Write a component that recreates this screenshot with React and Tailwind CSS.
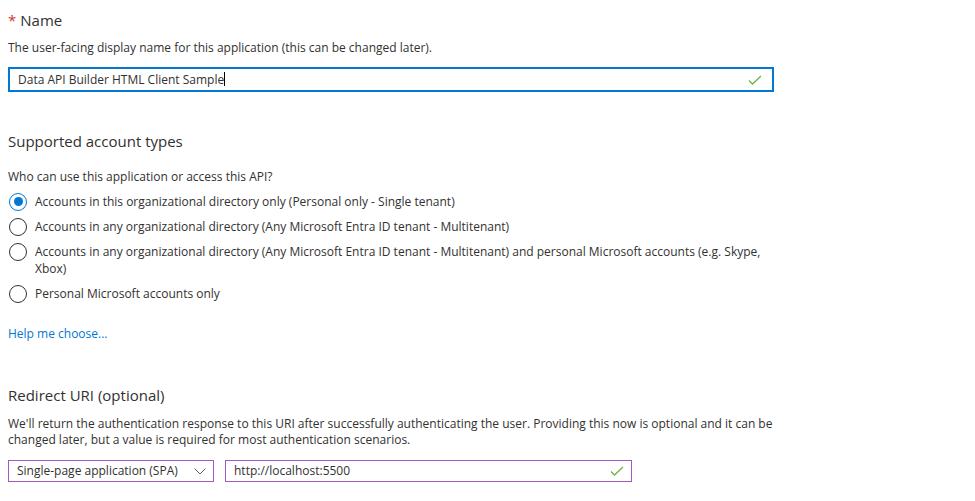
import React, { useState } from 'react';

function Check({ className }) {
  return (
    <svg width="14" height="10" viewBox="0 0 14 10" className={className}>
      <path d="M1 5.5 L4.5 9 L13 1" fill="none" stroke="#6bb34a" strokeWidth="1.3" />
    </svg>
  );
}

function Radio({ checked }) {
  return (
    <span className="flex h-[17px] shrink-0 items-center">
      <span className="flex h-[18px] w-[18px] items-center justify-center rounded-full border border-[#323130] bg-white data-[on=true]:border-[#0078d4]" data-on={checked}>
        {checked && <span className="h-[9px] w-[9px] rounded-full bg-[#0078d4]" />}
      </span>
    </span>
  );
}

const options = [
  'Accounts in this organizational directory only (Personal only - Single tenant)',
  'Accounts in any organizational directory (Any Microsoft Entra ID tenant - Multitenant)',
  'Accounts in any organizational directory (Any Microsoft Entra ID tenant - Multitenant) and personal Microsoft accounts (e.g. Skype, Xbox)',
  'Personal Microsoft accounts only',
];

export default function App() {
  const [picked, setPicked] = useState(0);

  return (
    <div className="min-h-screen bg-white pl-[8px] pt-[10px] text-[12px] text-[#323130]" style={{ fontFamily: '"Segoe UI", "Open Sans", sans-serif' }}>
      {/* Name */}
      <h2 className="text-[15px] leading-[20px]">
        <span className="mr-[4px] text-[#d13438]">*</span>Name
      </h2>
      <p className="mt-[10px] leading-[16px]">The user-facing display name for this application (this can be changed later).</p>
      <div className="mt-[11px] flex h-[25px] w-[766px] items-center border-2 border-[#0078d4] pl-[8px] pr-[10px]">
        <span className="flex-1">Data API Builder HTML Client Sample<span className="inline-block h-[14px] w-px translate-y-[2px] bg-black" /></span>
        <Check />
      </div>

      {/* Supported account types */}
      <h2 className="mt-[39px] text-[15px] leading-[20px]">Supported account types</h2>
      <p className="mt-[18px] leading-[16px]">Who can use this application or access this API?</p>
      <div className="mt-[8px] flex w-[760px] flex-col gap-[8px]">
        {options.map((label, i) => (
          <label key={i} className="flex cursor-pointer items-start gap-[8px] pl-[1px]" onClick={() => setPicked(i)}>
            <Radio checked={picked === i} />
            <span className="leading-[17px]">{label}</span>
          </label>
        ))}
      </div>

      <a href="#" className="mt-[24px] block w-fit leading-[16px] text-[#0078d4]">Help me choose...</a>

      {/* Redirect URI */}
      <h2 className="mt-[43px] text-[15px] leading-[20px]">Redirect URI (optional)</h2>
      <p className="mt-[11px] w-[770px] leading-[16px]">
        We'll return the authentication response to this URI after successfully authenticating the user. Providing this now is optional and it can be changed later, but a value is required for most authentication scenarios.
      </p>
      <div className="mt-[12px] flex gap-[11px]">
        <div className="flex h-[22px] w-[206px] items-center justify-between border border-[#a259c4] pl-[8px] pr-[7px]">
          <span>Single-page application (SPA)</span>
          <svg width="12" height="7" viewBox="0 0 12 7">
            <path d="M0.5 0.5 L6 6 L11.5 0.5" fill="none" stroke="#605e5c" strokeWidth="1" />
          </svg>
        </div>
        <div className="flex h-[22px] w-[407px] items-center justify-between border border-[#a259c4] pl-[8px] pr-[7px]">
          <span>http://localhost:5500</span>
          <Check />
        </div>
      </div>
    </div>
  );
}
